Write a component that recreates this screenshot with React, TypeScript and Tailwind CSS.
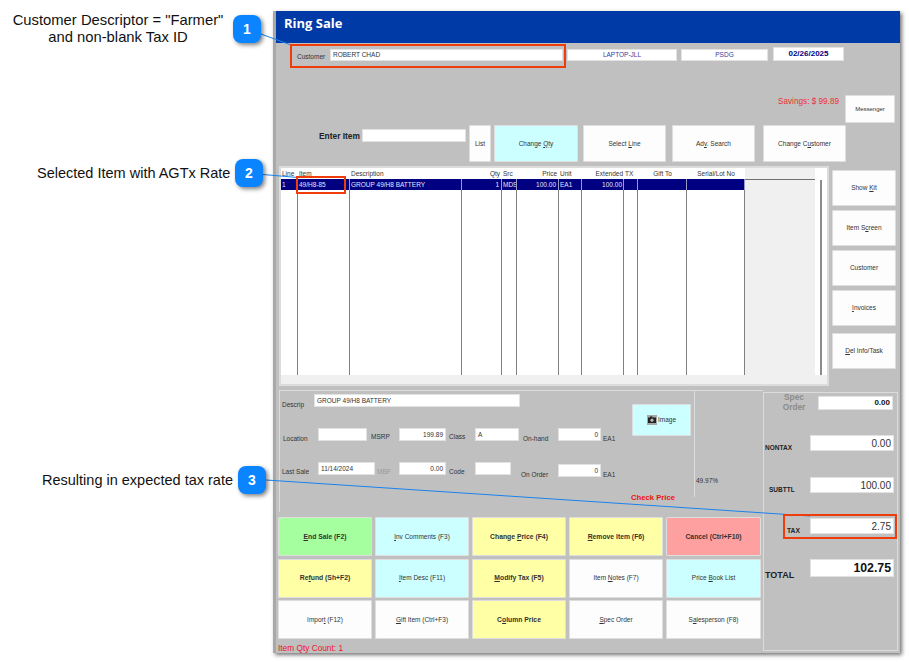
import React from 'react';

const Field = ({ className = '', children }: { className?: string; children?: React.ReactNode }) => (
  <div className={`flex shrink-0 items-center bg-white px-[3px] text-[#333] shadow-[inset_0_0_0_1px_#e2e2e2] ${className}`}>{children}</div>
);

const Btn = ({ className = '', children }: { className?: string; children: React.ReactNode }) => (
  <div className={`flex shrink-0 items-center justify-center rounded-[2px] text-[6.5px] leading-[10px] text-[#333] shadow-[inset_0_0_0_1px_#dedede] ${className}`}>{children}</div>
);

const Small = ({ className = '', children }: { className?: string; children: React.ReactNode }) => (
  <div className={`shrink-0 text-[6.5px] leading-[10px] whitespace-nowrap text-[#333] ${className}`}>{children}</div>
);

const columns = [
  { head: 'Line', row: '1', cls: 'text-left' },
  { head: 'Item', row: '49/H8-85', cls: 'text-left' },
  { head: 'Description', row: 'GROUP 49/H8 BATTERY', cls: 'text-left' },
  { head: 'Qty', row: '1', cls: 'text-right !pr-[2px]' },
  { head: 'Src', row: 'MDS', cls: 'text-left' },
  { head: 'Price', row: '100.00', cls: 'text-right !pr-[2px]' },
  { head: 'Unit', row: 'EA1', cls: 'text-left' },
  { head: 'Extended', row: '100.00', cls: 'text-right' },
  { head: 'TX', row: '', cls: 'text-left' },
  { head: 'Gift To', row: '', cls: 'text-center' },
  { head: 'Serial/Lot No', row: '', cls: 'text-center' },
];

const gridCols = 'grid grid-cols-[17px_52px_112px_40px_15px_42px_23px_42px_14px_49px_58px]';

const Callout = ({ n, className }: { n: number; className: string }) => (
  <div className={`absolute flex h-[28px] w-[28px] items-center justify-center rounded-[8px] bg-[#0a84ff] text-[14px] font-bold text-white shadow-[2px_2px_4px_rgba(0,0,0,0.5)] ${className}`}>{n}</div>
);

const Note = ({ className, children }: { className: string; children: React.ReactNode }) => (
  <div className={`absolute leading-[17px] text-[#111] ${className}`}>{children}</div>
);

export default function App() {
  return (
    <div className="relative h-[662px] w-[909px] overflow-hidden bg-white font-['Liberation_Sans',Arial,sans-serif]">
      {/* Application window */}
      <div className="ml-[273px] pt-[11px]">
        <div className="flex h-[642px] w-[627px] flex-col overflow-hidden border-l-[3px] border-[#a8a8a8] bg-[#c0c0c0] shadow-[2px_2px_4px_rgba(0,0,0,0.55)]">
          <div className="flex h-[32px] shrink-0 items-start bg-[#003aa6] pt-[4px] pl-[8px] font-['Open_Sans',sans-serif] text-[13px] leading-[16px] font-bold text-white">
            Ring Sale
          </div>

          {/* Customer row */}
          <div className="mt-[4px] flex h-[14px] shrink-0 items-end">
            <Small className="ml-[21px] w-[33px] translate-y-[1px]">Customer</Small>
            <Field className="h-[12px] w-[233px] text-[6.5px]">ROBERT CHAD</Field>
            <Field className="ml-[4px] h-[12px] w-[110px] justify-center text-[6.5px] !text-[#3a3a9a]">LAPTOP-JLL</Field>
            <Field className="ml-[4px] h-[12px] w-[87px] justify-center text-[6.5px] !text-[#3a3a9a]">PSDG</Field>
            <Field className="ml-[5px] h-[14px] w-[71px] justify-center text-[8px] font-bold !text-[#000080]">02/26/2025</Field>
          </div>

          {/* Savings and messenger */}
          <div className="mt-[34px] flex h-[28px] shrink-0 justify-end pr-[5px]">
            <div className="mt-[2px] mr-[6px] text-[8.2px] leading-[10px] text-[#ee3030]">Savings: $ 99.89</div>
            <Btn className="w-[50px] bg-[#fdfdfd] !text-[6px]">Messenger</Btn>
          </div>

          {/* Item entry row */}
          <div className="mt-[2px] flex h-[37px] shrink-0">
            <div className="mt-[6px] ml-[43px] w-[43px] text-[8.4px] leading-[10px] font-bold text-[#222]">Enter Item</div>
            <Field className="mt-[4px] h-[13px] w-[104px]" />
            <Btn className="ml-[3px] w-[22px] bg-[#fdfdfd]">List</Btn>
            <Btn className="ml-[3px] w-[84px] bg-[#ccffff]"><span>Change <u>Q</u>ty</span></Btn>
            <Btn className="ml-[5px] w-[83px] bg-[#fdfdfd]"><span>Select <u>L</u>ine</span></Btn>
            <Btn className="ml-[6px] w-[83px] bg-[#fdfdfd]"><span>Ad<u>v</u>. Search</span></Btn>
            <Btn className="ml-[8px] w-[83px] bg-[#fdfdfd]"><span>Change C<u>u</u>stomer</span></Btn>
          </div>

          {/* Items table and side buttons */}
          <div className="mt-[4px] flex h-[224px] shrink-0">
            <div className="ml-[3px] flex h-[220px] w-[550px] shrink-0 flex-col border-2 border-[#dcdcdc] bg-[#f0f0f0]">
              <div className="flex h-[207px] shrink-0">
                <div className="w-[464px] shrink-0 bg-white">
                  <div className={`${gridCols} h-[11px]`}>
                    {columns.map((c) => (
                      <div key={c.head} className={`truncate px-[1px] text-[6.5px] leading-[11px] text-[#333] ${c.cls}`}>{c.head}</div>
                    ))}
                  </div>
                  <div className={`${gridCols} h-[11px] bg-[#000080]`}>
                    {columns.map((c) => (
                      <div key={c.head} className={`overflow-hidden border-r border-[#9a9ac8] px-[1px] text-[6.5px] leading-[11px] whitespace-nowrap text-[#e4e4ff] ${c.cls}`}>{c.row}</div>
                    ))}
                  </div>
                  <div className={`${gridCols} h-[185px]`}>
                    {columns.map((c) => (
                      <div key={c.head} className="border-r border-[#808080]" />
                    ))}
                  </div>
                </div>
                <div className="mt-[11px] h-[1px] w-[70px] shrink-0 bg-[#707070]" />
                <div className="flex w-[12px] shrink-0 justify-center bg-white pt-[12px]">
                  <div className="h-[195px] w-[2px] bg-[#8c8c8c]" />
                </div>
              </div>
            </div>

            <div className="ml-[3px] flex w-[64px] shrink-0 flex-col gap-[4px] pt-[4px]">
              <Btn className="h-[36px] bg-[#fdfdfd]"><span>Show <u>K</u>it</span></Btn>
              <Btn className="h-[36px] bg-[#fdfdfd]"><span>Item S<u>c</u>reen</span></Btn>
              <Btn className="h-[36px] bg-[#fdfdfd]">Customer</Btn>
              <Btn className="h-[36px] bg-[#fdfdfd]"><span><u>I</u>nvoices</span></Btn>
              <Btn className="mt-[3px] h-[36px] bg-[#fdfdfd]"><span><u>D</u>el Info/Task</span></Btn>
            </div>
          </div>

          {/* Lower area */}
          <div className="flex min-h-0 flex-1">
            <div className="w-[487px] shrink-0">
              <div className="ml-[3px] h-[122px] border-t border-l border-[#dcdcdc]">
                <div className="flex h-[106px]">
                  <div className="w-[352px] shrink-0 pt-[3px]">
                    <div className="flex h-[13px]">
                      <Small className="ml-[2px] w-[32px] pt-[6px]">Descrip</Small>
                      <Field className="h-[13px] w-[206px] text-[6.5px]">GROUP 49/H8 BATTERY</Field>
                    </div>
                    <div className="mt-[21px] flex h-[13px]">
                      <Small className="ml-[3px] w-[35px] pt-[6px]">Location</Small>
                      <Field className="h-[13px] w-[49px]" />
                      <Small className="ml-[4px] w-[28px] pt-[4px]">MSRP</Small>
                      <Field className="h-[13px] w-[47px] justify-end text-[6.5px]">199.89</Field>
                      <Small className="ml-[3px] w-[26px] pt-[4px]">Class</Small>
                      <Field className="h-[13px] w-[44px] text-[6.5px]">A</Field>
                      <Small className="ml-[4px] w-[35px] pt-[6px]">On-hand</Small>
                      <Field className="h-[13px] w-[43px] justify-end text-[6.5px]">0</Field>
                      <Small className="ml-[2px] pt-[6px]">EA1</Small>
                    </div>
                    <div className="mt-[21px] flex h-[15px]">
                      <Small className="ml-[2px] w-[36px] pt-[5px]">Last Sale</Small>
                      <Field className="h-[13px] w-[57px] text-[6.5px]">11/14/2024</Field>
                      <Small className="ml-[2px] w-[22px] pt-[5px] !text-[#999]">MBF</Small>
                      <Field className="h-[13px] w-[47px] justify-end text-[6.5px]">0.00</Field>
                      <Small className="ml-[3px] w-[26px] pt-[5px]">Code</Small>
                      <Field className="h-[13px] w-[36px]" />
                      <Small className="ml-[10px] w-[37px] pt-[8px]">On Order</Small>
                      <Field className="mt-[2px] h-[13px] w-[43px] justify-end text-[6.5px]">0</Field>
                      <Small className="ml-[2px] pt-[8px]">EA1</Small>
                    </div>
                  </div>
                  <div className="w-[63px] shrink-0 border-r border-[#dcdcdc] pt-[13px]">
                    <Btn className="h-[32px] w-[59px] gap-[1px] bg-[#ccffff]">
                      <svg viewBox="0 0 10 10" className="h-[10px] w-[10px]">
                        <rect width="10" height="10" fill="#a8a8a8" />
                        <rect x="1" y="2.5" width="8" height="5.5" fill="#222" />
                        <rect x="3" y="1.5" width="2.5" height="1.5" fill="#222" />
                        <circle cx="5" cy="5.2" r="1.6" fill="#bdbdbd" />
                      </svg>
                      <span>Image</span>
                    </Btn>
                  </div>
                  <Small className="ml-[1px] pt-[85px]">49.97%</Small>
                </div>
                <div className="-mt-[4px] ml-[351px] text-[7.7px] leading-[10px] font-bold whitespace-nowrap text-[#f01010]">Check Price</div>
              </div>

              <div className="mt-[5px] ml-[2px] grid grid-cols-[94px_94px_94px_94px_95px] grid-rows-[39px_39px_39px] gap-x-[3px] gap-y-[2.5px] [&>div]:h-[39px]">
                <Btn className="bg-[#a6ff9f] font-bold !text-[6.8px]"><span><u>E</u>nd Sale (F2)</span></Btn>
                <Btn className="bg-[#ccffff]"><span><u>I</u>nv Comments (F3)</span></Btn>
                <Btn className="bg-[#ffffa6] font-bold !text-[6.8px]"><span>Change <u>P</u>rice (F4)</span></Btn>
                <Btn className="bg-[#ffffa6] font-bold !text-[6.8px]"><span><u>R</u>emove Item (F6)</span></Btn>
                <Btn className="bg-[#ffa0a0] font-bold !text-[6.8px]">Cancel (Ctrl+F10)</Btn>
                <Btn className="bg-[#ffffa6] font-bold !text-[6.8px]"><span>Re<u>f</u>und (Sh+F2)</span></Btn>
                <Btn className="bg-[#ccffff]"><span><u>I</u>tem Desc (F11)</span></Btn>
                <Btn className="bg-[#ffffa6] font-bold !text-[6.8px]"><span><u>M</u>odify Tax (F5)</span></Btn>
                <Btn className="bg-[#fdfdfd]"><span>Item <u>N</u>otes (F7)</span></Btn>
                <Btn className="bg-[#ccffff]"><span>Price <u>B</u>ook List</span></Btn>
                <Btn className="bg-[#fdfdfd]"><span>Impor<u>t</u> (F12)</span></Btn>
                <Btn className="bg-[#fdfdfd]"><span><u>G</u>ift Item (Ctrl+F3)</span></Btn>
                <Btn className="bg-[#ffffa6] font-bold !text-[6.8px]"><span>C<u>o</u>lumn Price</span></Btn>
                <Btn className="bg-[#fdfdfd]"><span><u>S</u>pec Order</span></Btn>
                <Btn className="bg-[#fdfdfd]"><span>S<u>a</u>lesperson (F8)</span></Btn>
              </div>
              <div className="mt-[4px] ml-[2px] text-[8.3px] leading-[10px] text-[#f01030]">Item Qty Count: 1</div>
            </div>

            {/* Totals panel */}
            <div className="mt-[2px] h-[259px] w-[135px] shrink-0 border border-[#dcdcdc]">
              <div className="flex h-[42px]">
                <div className="-mt-[1px] ml-[12px] w-[36px] text-center text-[8.3px] leading-[10px] font-bold text-[#8c8c8c]">Spec<br />Order</div>
                <Field className="mt-[3px] ml-[6px] h-[14px] w-[75px] justify-end text-[8px] font-bold !text-[#111]">0.00</Field>
              </div>
              <div className="flex h-[42px]">
                <div className="w-[46px] pt-[8px] pl-[1px] text-[6.5px] leading-[10px] font-bold text-[#222]">NONTAX</div>
                <Field className="h-[16px] w-[84px] justify-end text-[10px]">0.00</Field>
              </div>
              <div className="flex h-[41px]">
                <div className="w-[46px] pt-[8px] pl-[5px] text-[6.5px] leading-[10px] font-bold text-[#222]">SUBTTL</div>
                <Field className="h-[16px] w-[84px] justify-end text-[10px]">100.00</Field>
              </div>
              <div className="flex h-[41px]">
                <div className="w-[46px] pt-[8px] pl-[23px] text-[6.7px] leading-[10px] font-bold text-[#222]">TAX</div>
                <Field className="h-[16px] w-[84px] justify-end text-[10px]">2.75</Field>
              </div>
              <div className="flex">
                <div className="w-[46px] pt-[10px] pl-[1px] text-[9px] leading-[12px] font-bold text-[#222]">TOTAL</div>
                <Field className="h-[18px] w-[84px] justify-end text-[12.3px] font-bold !text-[#111]">102.75</Field>
              </div>
            </div>
          </div>
        </div>
      </div>

      {/* Annotation overlay */}
      <svg className="pointer-events-none absolute top-0 left-0 h-[662px] w-[909px]" viewBox="0 0 909 662">
        <line x1="261" y1="34" x2="291" y2="45" stroke="#1a82ee" strokeWidth="1" />
        <line x1="263" y1="174.5" x2="298" y2="177.5" stroke="#1a82ee" strokeWidth="1" />
        <line x1="266" y1="480" x2="810" y2="516" stroke="#1a82ee" strokeWidth="1" />
      </svg>
      <div className="absolute top-[44px] left-[290px] h-[24px] w-[276px] border-2 border-[#f03c0a]" />
      <div className="absolute top-[176px] left-[296px] h-[18px] w-[50px] border-2 border-[#f03c0a]" />
      <div className="absolute top-[514px] left-[783px] h-[25px] w-[114px] border-2 border-[#f03c0a]" />

      <Callout n={1} className="top-[15px] left-[233px]" />
      <Callout n={2} className="top-[159px] left-[235px]" />
      <Callout n={3} className="top-[466px] left-[238px]" />

      <Note className="top-[12px] left-[2px] w-[232px] text-center text-[14.8px]">
        Customer Descriptor = "Farmer"<br />and non-blank Tax ID
      </Note>
      <Note className="top-[165px] left-[37px] text-[14.5px] whitespace-nowrap">Selected Item with AGTx Rate</Note>
      <Note className="top-[472px] left-[42px] text-[14.5px] whitespace-nowrap">Resulting in expected tax rate</Note>
    </div>
  );
}
